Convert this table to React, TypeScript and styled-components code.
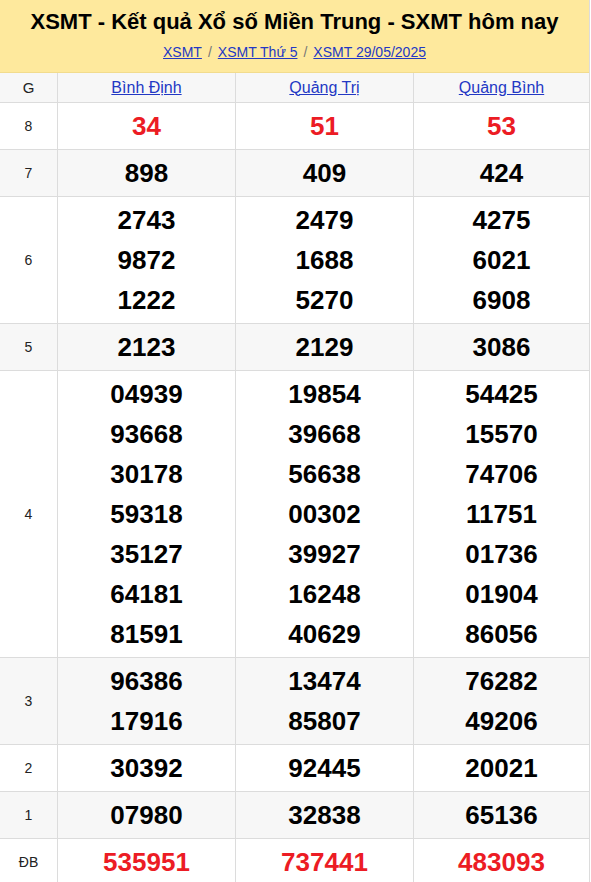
import styled, { createGlobalStyle } from 'styled-components'

const GlobalStyle = createGlobalStyle`
  html, body {
    margin: 0;
    padding: 0;
    background: #fff;
    font-family: "Liberation Sans", Arial, sans-serif;
  }
`

interface IPrize {
  label: string;
  values: string[][];
  red?: boolean;
}

const provinces = ['Bình Định', 'Quảng Trị', 'Quảng Bình']

const prizes: IPrize[] = [
  { label: '8', values: [['34'], ['51'], ['53']], red: true },
  { label: '7', values: [['898'], ['409'], ['424']] },
  { label: '6', values: [['2743', '9872', '1222'], ['2479', '1688', '5270'], ['4275', '6021', '6908']] },
  { label: '5', values: [['2123'], ['2129'], ['3086']] },
  {
    label: '4',
    values: [
      ['04939', '93668', '30178', '59318', '35127', '64181', '81591'],
      ['19854', '39668', '56638', '00302', '39927', '16248', '40629'],
      ['54425', '15570', '74706', '11751', '01736', '01904', '86056'],
    ],
  },
  { label: '3', values: [['96386', '17916'], ['13474', '85807'], ['76282', '49206']] },
  { label: '2', values: [['30392'], ['92445'], ['20021']] },
  { label: '1', values: [['07980'], ['32838'], ['65136']] },
  { label: 'ĐB', values: [['535951'], ['737441'], ['483093']], red: true },
]

export default function App(): JSX.Element {
  return (<Page>
    <GlobalStyle />
    <Header>
      <Title>XSMT - Kết quả Xổ số Miền Trung - SXMT hôm nay</Title>
      <Crumbs>
        <a href='#'>XSMT</a>
        <Sep>/</Sep>
        <a href='#'>XSMT Thứ 5</a>
        <Sep>/</Sep>
        <a href='#'>XSMT 29/05/2025</a>
      </Crumbs>
    </Header>
    <Table>
      <Row $alt>
        <HeadCell>G</HeadCell>
        {provinces.map((p) => (
          <HeadCell key={p}><a href='#'>{p}</a></HeadCell>
        ))}
      </Row>
      {prizes.map((prize, i) => (
        <Row key={prize.label} $alt={i % 2 === 1}>
          <Label>{prize.label}</Label>
          {prize.values.map((col, j) => (
            <NumCell key={j}>
              {col.map((n) => (
                <Num key={n} $red={prize.red}>{n}</Num>
              ))}
            </NumCell>
          ))}
        </Row>
      ))}
    </Table>
  </Page>)
}

const Page = styled.div`
  width: 590px;
  border-right: 1px solid #dcdcdc;
  box-sizing: border-box;
`

const Header = styled.div`
  background: #fee99d;
  padding: 8px 0 10px;
  text-align: center;
  border-bottom: 1px solid #f2dc8e;
`

const Title = styled.h1`
  margin: 0;
  font-size: 22px;
  line-height: 28px;
  font-weight: bold;
  color: #000;
`

const Crumbs = styled.div`
  margin-top: 6px;
  font-size: 14px;
  line-height: 20px;

  > a {
    color: #2338c4;
    text-decoration: underline;
  }
`

const Sep = styled.span`
  color: #777;
  margin: 0 6px;
`

const Table = styled.div`
  display: flex;
  flex-direction: column;
`

const Row = styled.div<{ $alt?: boolean }>`
  display: grid;
  grid-template-columns: 57px 178px 178px 1fr;
  background: ${(p) => (p.$alt ? '#f7f7f7' : '#fff')};
  border-bottom: 1px solid #dcdcdc;
`

const HeadCell = styled.div`
  height: 29px;
  display: flex;
  align-items: center;
  justify-content: center;
  font-size: 16px;
  color: #222;
  border-left: 1px solid #dcdcdc;

  &:first-child {
    border-left: none;
    font-size: 15px;
  }

  > a {
    color: #2338c4;
    text-decoration: underline;
  }
`

const Label = styled.div`
  display: flex;
  align-items: center;
  justify-content: center;
  font-size: 14px;
  color: #222;
`

const NumCell = styled.div`
  display: flex;
  flex-direction: column;
  align-items: center;
  padding: 3px 0;
  border-left: 1px solid #dcdcdc;
`

const Num = styled.div<{ $red?: boolean }>`
  height: 40px;
  line-height: 40px;
  font-size: 26px;
  font-weight: bold;
  color: ${(p) => (p.$red ? '#ec1c24' : '#000')};
`
